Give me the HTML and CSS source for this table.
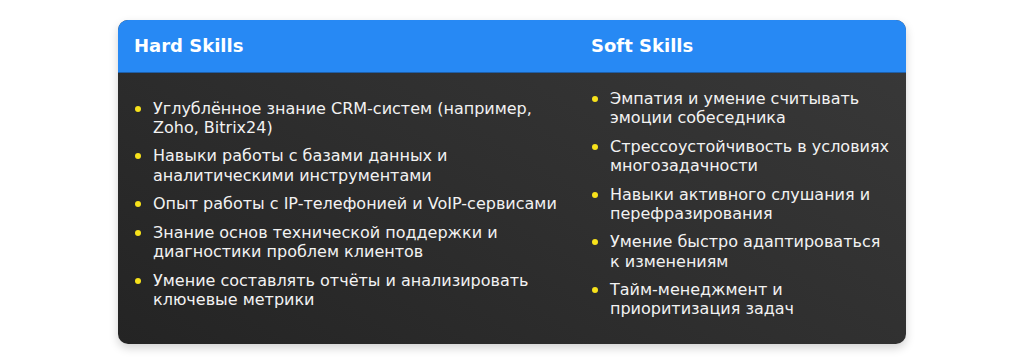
FILE: index.html
```html
<!DOCTYPE html>
<html lang="ru">
<head>
<meta charset="utf-8">
<link rel="stylesheet" href="styles.css">
</head>
<body>
<table class="skills">
  <thead>
    <tr>
      <th class="col-hard">Hard Skills</th>
      <th class="col-soft">Soft Skills</th>
    </tr>
  </thead>
  <tbody>
    <tr>
      <td>
        <ul class="list">
          <li>Углублённое знание CRM-систем (например, Zoho, Bitrix24)</li>
          <li>Навыки работы с базами данных и аналитическими инструментами</li>
          <li>Опыт работы с IP-телефонией и VoIP-сервисами</li>
          <li>Знание основ технической поддержки и диагностики проблем клиентов</li>
          <li>Умение составлять отчёты и анализировать ключевые метрики</li>
        </ul>
      </td>
      <td>
        <ul class="list">
          <li>Эмпатия и умение считывать эмоции собеседника</li>
          <li>Стрессоустойчивость в условиях многозадачности</li>
          <li>Навыки активного слушания и перефразирования</li>
          <li>Умение быстро адаптироваться к изменениям</li>
          <li>Тайм-менеджмент и приоритизация задач</li>
        </ul>
      </td>
    </tr>
  </tbody>
</table>
</body>
</html>
```
FILE: styles.css
```css
html, body {
  margin: 0;
  padding: 0;
  background: #ffffff;
}
body {
  padding: 20px 0;
  font-family: "DejaVu Sans", sans-serif;
}
.skills {
  width: 788px;
  margin: 0 auto;
  border-collapse: separate;
  border-spacing: 0;
  table-layout: fixed;
  border-radius: 10px;
  overflow: hidden;
  background: linear-gradient(30deg, #242424 0%, #2f2f2f 50%, #393939 100%);
  box-shadow: 0 4px 10px rgba(0, 0, 0, 0.18);
}
.skills th {
  background: #2789f4;
  color: #ffffff;
  text-align: left;
  font-size: 18px;
  font-weight: bold;
  line-height: 20px;
  padding: 16px 16px;
  border-bottom: 1px solid #1f5fa8;
}
.col-hard {
  width: 425px;
}
.skills td {
  padding: 16px;
  vertical-align: middle;
  color: #f2f2f2;
}
.list {
  list-style: none;
  margin: 0;
  padding: 0;
}
.list li {
  position: relative;
  padding-left: 19px;
  font-size: 16px;
  line-height: 19.2px;
  margin-bottom: 9.4px;
}
.list li::before {
  content: "";
  position: absolute;
  left: 1px;
  top: 7px;
  width: 6px;
  height: 6px;
  border-radius: 50%;
  background: #f7e21b;
}
```
